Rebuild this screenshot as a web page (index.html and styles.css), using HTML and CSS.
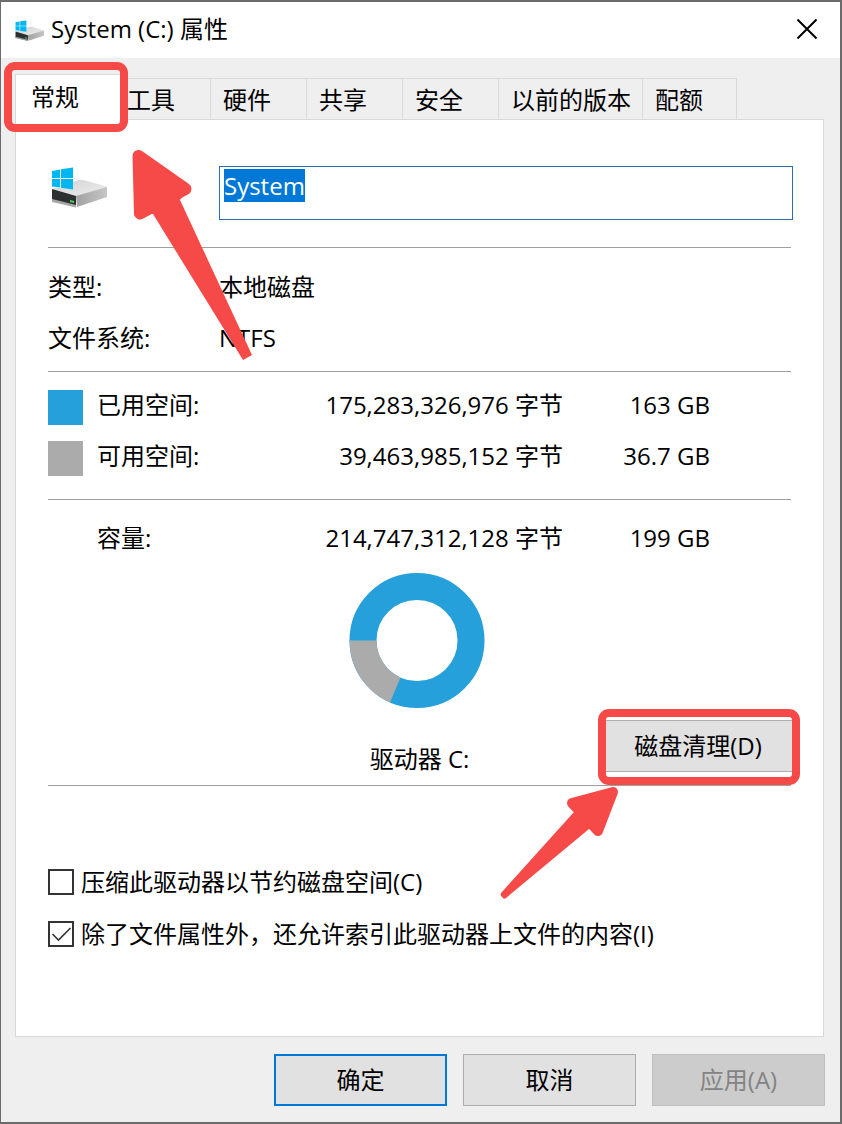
FILE: index.html
```
<!DOCTYPE html>
<html lang="zh-CN">
<head>
  <meta charset="UTF-8" />
  <meta name="viewport" content="width=device-width, initial-scale=1.0"/>
  <title>System (C:) 属性</title>
  <link rel="stylesheet" href="styles.css">
</head>
<body>
  <svg class="defs" aria-hidden="true">
    <defs>
      <linearGradient id="driveTop" x1="0" y1="0" x2="1" y2="1">
        <stop offset="0" stop-color="#d2d2d2"/>
        <stop offset="1" stop-color="#eeeeee"/>
      </linearGradient>
      <linearGradient id="driveSide" x1="0" y1="0" x2="1" y2="0">
        <stop offset="0" stop-color="#a2a2a2"/>
        <stop offset="1" stop-color="#c6c6c6"/>
      </linearGradient>
      <symbol id="drive" viewBox="0 0 56 42">
        <path d="M1 22 L28 13 Q30 12.500 32 13 L54 19 Q56 20 55.500 21 L25 30 Z" fill="url(#driveTop)"/>
        <path d="M25 29 L56 20 V30 L26 40 Z" fill="url(#driveSide)"/>
        <path d="M1 22 L25 29 V40 L1 34 Z" fill="#2d3030"/>
        <path d="M1 32 L25 38 V40.500 L1 35 Z" fill="#a8a8a8"/>
        <path d="M19 33 l4 1 v2 l-4 -1 Z" fill="#4fd15a"/>
        <path d="M0 0 H22 V22 L0 20 Z" fill="#fff"/>
        <path d="M1 4 L9 2.500 V11 H1 Z M10 2.300 L22 0.500 V11 H10 Z M1 12 H9 V20.500 L1 19.500 Z M10 12 H22 V22.500 L10 20.800 Z" fill="#00b7f1"/>
      </symbol>
    </defs>
  </svg>

  <main class="window">
    <header class="titlebar">
      <svg class="title-icon" aria-hidden="true"><use href="#drive"/></svg>
      <h1>System (C:) 属性</h1>
      <button class="close" aria-label="关闭">
        <svg viewBox="0 0 20 20" aria-hidden="true"><path d="M0.500 0.500 L19.500 19.500 M19.500 0.500 L0.500 19.500"/></svg>
      </button>
    </header>

    <div class="tabs">
      <div class="tab-list" role="tablist">
        <button class="tab active" role="tab" aria-selected="true">常规</button>
        <button class="tab" role="tab">工具</button>
        <button class="tab" role="tab">硬件</button>
        <button class="tab" role="tab">共享</button>
        <button class="tab" role="tab">安全</button>
        <button class="tab" role="tab">以前的版本</button>
        <button class="tab" role="tab">配额</button>
      </div>
      <svg class="arrow arrow-tab" viewBox="130 148 126 216" aria-hidden="true">
        <path class="head" d="M138.500 156 L185.500 189 L140 213.500 Z"/>
        <path d="M153 214 L243 360 L252 355 L180 200 L186 189 L140 213 Z"/>
      </svg>
    </div>

    <section class="panel" role="tabpanel">
      <div class="volume">
        <svg class="drive-icon" aria-hidden="true"><use href="#drive"/></svg>
        <input type="text" id="volumeName" class="volume-name" value="System" aria-label="卷标" autocomplete="off" spellcheck="false">
      </div>

      <dl class="info">
        <dt>类型:</dt>
        <dd>本地磁盘</dd>
        <dt>文件系统:</dt>
        <dd>NTFS</dd>
      </dl>

      <div class="usage">
        <table>
          <tbody>
            <tr>
              <td class="key"><span class="swatch used"></span></td>
              <th scope="row">已用空间:</th>
              <td>175,283,326,976 字节</td>
              <td class="size">163 GB</td>
            </tr>
            <tr>
              <td class="key"><span class="swatch free"></span></td>
              <th scope="row">可用空间:</th>
              <td>39,463,985,152 字节</td>
              <td class="size">36.7 GB</td>
            </tr>
          </tbody>
          <tfoot>
            <tr>
              <td class="key"></td>
              <th scope="row">容量:</th>
              <td>214,747,312,128 字节</td>
              <td class="size">199 GB</td>
            </tr>
          </tfoot>
        </table>
      </div>

      <div class="drive">
        <figure class="chart">
          <svg viewBox="0 0 140 136" aria-hidden="true">
            <circle cx="67" cy="67.500" r="54" fill="none" stroke="#26a0da" stroke-width="27"/>
            <path d="M-0.500 67.500 A67.500 67.500 0 0 0 40 129.500 L50.500 104.500 A40.500 40.500 0 0 1 26.500 67.500 Z" fill="#ababab"/>
          </svg>
          <figcaption>驱动器 C:</figcaption>
        </figure>
        <div class="cleanup">
          <button class="btn">磁盘清理(D)</button>
          <svg class="arrow arrow-cleanup" viewBox="498 785 122 118" aria-hidden="true">
            <path class="head" d="M613 793 L572 804 L598 832 Z"/>
            <path d="M574 813 L501 894 Q500 896 502 898 Q504 901 506 899 L589 830 L600 830 L572 804 Z"/>
          </svg>
        </div>
      </div>

      <div class="options">
        <label class="option"><input type="checkbox">压缩此驱动器以节约磁盘空间(C)</label>
        <label class="option"><input type="checkbox" checked>除了文件属性外，还允许索引此驱动器上文件的内容(I)</label>
      </div>
    </section>

    <footer class="actions">
      <button class="btn primary">确定</button>
      <button class="btn">取消</button>
      <button class="btn" disabled>应用(A)</button>
    </footer>
  </main>

  <script>
    // The volume name is ready to be typed over when the dialog opens
    const volumeName = document.getElementById('volumeName');
    volumeName.focus();
    volumeName.select();
  </script>
</body>
</html>
```
FILE: styles.css
```
* {
  box-sizing: border-box;
}

body {
  margin: 0;
  font-family: "Open Sans", "Noto Sans CJK SC", sans-serif;
  font-size: 24px;
  line-height: 32px;
  color: #000;
}

button, input {
  font: inherit;
  color: inherit;
  border-radius: 0;
}

.defs {
  position: absolute;
  width: 0;
  height: 0;
}

.window {
  display: flex;
  flex-direction: column;
  min-height: 100vh;
  background: #efefef;
  border: 2px solid #6b6b6b;
  border-left-width: 1px;
}

/* Title bar */
.titlebar {
  display: flex;
  align-items: center;
  height: 56px;
  padding: 0 23px 2px 14px;
  background: #fff;
}

.title-icon {
  width: 29px;
  height: 22px;
  margin: 4px 7px 0 0;
}

h1 {
  flex: 1;
  margin: 0;
  font-size: 24px;
  font-weight: normal;
}

.close {
  display: flex;
  padding: 0;
  border: none;
  background: none;
}

.close svg {
  width: 20px;
  height: 20px;
  stroke: #000;
  stroke-width: 2;
}

/* Tabs */
.tabs {
  position: relative;
  z-index: 1;
  margin: 16px 16px 0 14px;
}

.tab-list {
  display: flex;
  align-items: flex-end;
}

.tab {
  height: 42px;
  padding: 2px 11px 0 12px;
  border: 1px solid #d9d9d9;
  border-left: none;
  background: #efefef;
  text-align: left;
  white-space: nowrap;
  min-width: 96px;
}

.tab:last-child {
  min-width: 94px;
}

.tab.active {
  position: relative;
  z-index: 1;
  width: 106px;
  height: 46px;
  margin-right: -6px;
  padding: 0 15px 2px;
  border-left: 1px solid #d9d9d9;
  border-bottom: none;
  background: #fff;
}

/* Red markers */
.tab.active::after,
.cleanup::after {
  content: "";
  position: absolute;
  border: 8px solid #f54a48;
  border-radius: 11px;
  pointer-events: none;
}

.tab.active::after {
  inset: -13px -8px -12px -12px;
}

.cleanup::after {
  inset: -11px -7px -13px -5px;
}

.arrow {
  position: absolute;
  fill: #f54a48;
  pointer-events: none;
}

.arrow .head {
  stroke: #f54a48;
  stroke-width: 12;
  stroke-linejoin: round;
}

.arrow-tab {
  left: 115px;
  top: 74px;
  width: 126px;
  height: 216px;
}

.arrow-cleanup {
  left: -105px;
  top: 64px;
  width: 122px;
  height: 118px;
}

.arrow-cleanup .head {
  stroke-width: 10;
}

/* General page */
.panel {
  flex: 1;
  margin: -1px 16px 0 14px;
  padding: 46px 30px 0 32px;
  background: #fff;
  border: 1px solid #d9d9d9;
}

.volume {
  display: flex;
  align-items: flex-start;
  padding-bottom: 27px;
}

.drive-icon {
  flex: none;
  width: 56px;
  height: 42px;
  margin: 1px 112px 0 3px;
}

.volume-name {
  flex: 1;
  min-width: 0;
  height: 54px;
  padding: 3px 4px 18px;
  border: 1px solid #2a6fae;
  outline: none;
  background: #fff;
}

.volume-name::selection {
  background: #0078d7;
  color: #fff;
}

.info {
  display: grid;
  grid-template-columns: 171px 1fr;
  row-gap: 19px;
  margin: 0 2px 0 0;
  padding: 23px 0 17px;
  border-top: 1px solid #a0a0a0;
}

.info dd {
  margin: 0;
}

.usage {
  margin-right: 2px;
  padding-top: 10px;
  border-top: 1px solid #a0a0a0;
}

.usage table {
  width: 100%;
  border-spacing: 0;
}

.usage th,
.usage td {
  padding: 7px 0 12px;
  font-weight: normal;
  text-align: right;
  vertical-align: top;
  white-space: nowrap;
}

.usage th {
  text-align: left;
}

.usage .key {
  width: 49px;
  padding: 8px 0;
}

.usage .size {
  width: 228px;
  padding-right: 81px;
}

.usage tbody tr:last-child > * {
  padding-bottom: 23px;
}

.usage tfoot tr > * {
  padding-top: 22px;
  padding-bottom: 4px;
  border-top: 1px solid #a0a0a0;
}

.swatch {
  display: block;
  width: 35px;
  height: 35px;
}

.swatch.used {
  background: #26a0da;
}

.swatch.free {
  background: #ababab;
}

.drive {
  display: grid;
  grid-template-columns: 1fr auto 1fr;
  margin-right: 2px;
  padding: 15px 0 10px;
  border-bottom: 1px solid #a0a0a0;
}

.chart {
  grid-column: 2;
  margin: 0;
  text-align: center;
}

.chart svg {
  display: block;
  width: 140px;
  height: 136px;
  margin-bottom: 34px;
  overflow: visible;
}

.cleanup {
  position: relative;
  align-self: end;
  justify-self: end;
  margin: 0 -2px 3px 0;
}

.btn {
  display: block;
  width: 173px;
  height: 52px;
  padding: 0;
  border: 1px solid #adadad;
  background: #e1e1e1;
}

.cleanup .btn {
  width: 190px;
}

.btn.primary {
  border: 2px solid #0078d7;
}

.btn:disabled {
  border-color: #bfbfbf;
  background: #cccccc;
  color: #838383;
}

.options {
  display: grid;
  row-gap: 20px;
  padding: 80px 0;
}

.option {
  display: flex;
  align-items: center;
  gap: 7px;
}

.option input {
  flex: none;
  appearance: none;
  width: 26px;
  height: 26px;
  margin: 0;
  border: 2px solid #333;
  background: #fff;
}

.option input:checked {
  background: #fff url("data:image/svg+xml,%3Csvg xmlns='http://www.w3.org/2000/svg' viewBox='0 0 22 22'%3E%3Cpath d='M2.500 11 L8.500 17 L20.500 5' fill='none' stroke='%23333' stroke-width='1.600'/%3E%3C/svg%3E") center / 22px no-repeat;
}

.actions {
  display: flex;
  justify-content: flex-end;
  gap: 16px;
  padding: 17px 15px 16px;
}
```
